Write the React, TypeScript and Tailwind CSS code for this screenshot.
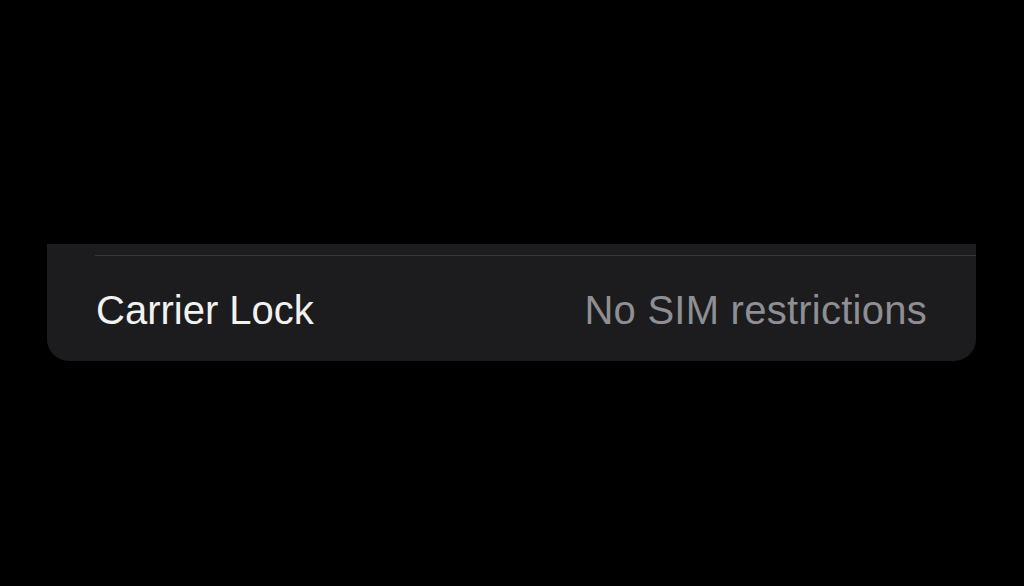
export default function App() {
  return (
    <main className="h-[586px] w-[1024px] bg-black pt-[244px] font-['Liberation_Sans',sans-serif]">
      <div className="ml-[47px] w-[929px] rounded-b-[22px] bg-[#1c1c1e] pt-[11px]">
        {/* Separator */}
        <div className="ml-[48px] h-px bg-[#38383a]" />
        {/* Row */}
        <div className="flex h-[105px] items-center justify-between pl-[49px] pr-[49px] pt-[2px]">
          <span className="text-[40px] leading-none tracking-[0px] text-[#f2f2f2]">Carrier Lock</span>
          <span className="text-[40px] leading-none tracking-[0.25px] text-[#8e8e93]">No SIM restrictions</span>
        </div>
      </div>
    </main>
  );
}
